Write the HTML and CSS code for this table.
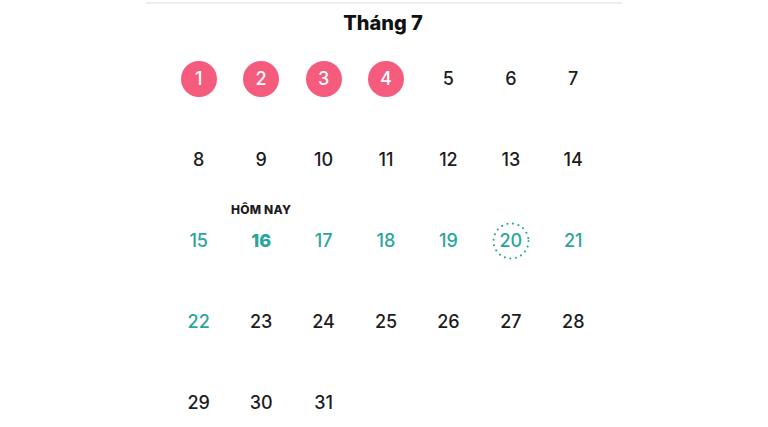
FILE: index.html
```html
<!DOCTYPE html>
<html lang="vi">
<head>
    <meta charset="UTF-8">
    <meta name="viewport" content="width=device-width, initial-scale=1.0">
    <title>Lịch</title>
    <link rel="stylesheet" href="styles.css">
</head>
<body>
    <div class="month">
        <div class="title">Tháng 7</div>
        <div class="days">
            <div class="day"><span class="num period">1</span></div>
            <div class="day"><span class="num period">2</span></div>
            <div class="day"><span class="num period">3</span></div>
            <div class="day"><span class="num period">4</span></div>
            <div class="day"><span class="num">5</span></div>
            <div class="day"><span class="num">6</span></div>
            <div class="day"><span class="num">7</span></div>

            <div class="day"><span class="num">8</span></div>
            <div class="day"><span class="num">9</span></div>
            <div class="day"><span class="num">10</span></div>
            <div class="day"><span class="num">11</span></div>
            <div class="day"><span class="num">12</span></div>
            <div class="day"><span class="num">13</span></div>
            <div class="day"><span class="num">14</span></div>

            <div class="day"><span class="num fertile">15</span></div>
            <div class="day today"><span class="label">HÔM NAY</span><span class="num fertile">16</span></div>
            <div class="day"><span class="num fertile">17</span></div>
            <div class="day"><span class="num fertile">18</span></div>
            <div class="day"><span class="num fertile">19</span></div>
            <div class="day">
                <span class="num fertile ovulation">
                    <svg class="ring" width="38" height="38" viewBox="0 0 38 38">
                        <circle cx="19" cy="19" r="17.5" fill="none" stroke="#2ba59c" stroke-width="2" stroke-linecap="round" stroke-dasharray="0.1 5.49"/>
                    </svg>
                    20
                </span>
            </div>
            <div class="day"><span class="num fertile">21</span></div>

            <div class="day"><span class="num fertile">22</span></div>
            <div class="day"><span class="num">23</span></div>
            <div class="day"><span class="num">24</span></div>
            <div class="day"><span class="num">25</span></div>
            <div class="day"><span class="num">26</span></div>
            <div class="day"><span class="num">27</span></div>
            <div class="day"><span class="num">28</span></div>

            <div class="day"><span class="num">29</span></div>
            <div class="day"><span class="num">30</span></div>
            <div class="day"><span class="num">31</span></div>
        </div>
    </div>
</body>
</html>
```

FILE: styles.css
```css
body {
    margin: 0;
    font-family: "Inter", "Roboto", sans-serif;
    background: #fff;
    color: #1c1c1e;
    overflow: hidden;
}

.month {
    width: 476px;
    margin: 2px auto 0;
    border-top: 2px solid #ececec;
}

.title {
    text-align: center;
    font-size: 20px;
    font-weight: 800;
    line-height: 24px;
    padding: 7px 2px 3px 0;
    color: #111;
}

.days {
    width: 437px;
    padding-left: 4px;
    margin: 0 auto;
    display: grid;
    grid-template-columns: repeat(7, 1fr);
    grid-auto-rows: 81px;
}

.day {
    display: flex;
    justify-content: center;
    align-items: center;
    position: relative;
}

.num {
    width: 36px;
    height: 36px;
    border-radius: 50%;
    display: flex;
    justify-content: center;
    align-items: center;
    font-size: 18px;
    font-weight: 500;
    box-sizing: border-box;
    position: relative;
}

.period {
    background-color: #f45b7c;
    color: #fff;
}

.fertile {
    color: #2ba59c;
}

.today .num {
    font-weight: 800;
}

.ring {
    position: absolute;
    left: -1px;
    top: -1px;
}

.label {
    position: absolute;
    top: 2px;
    left: 0;
    right: 0;
    text-align: center;
    font-size: 12px;
    font-weight: 800;
    color: #1c1c1e;
    letter-spacing: 0.2px;
}
```
